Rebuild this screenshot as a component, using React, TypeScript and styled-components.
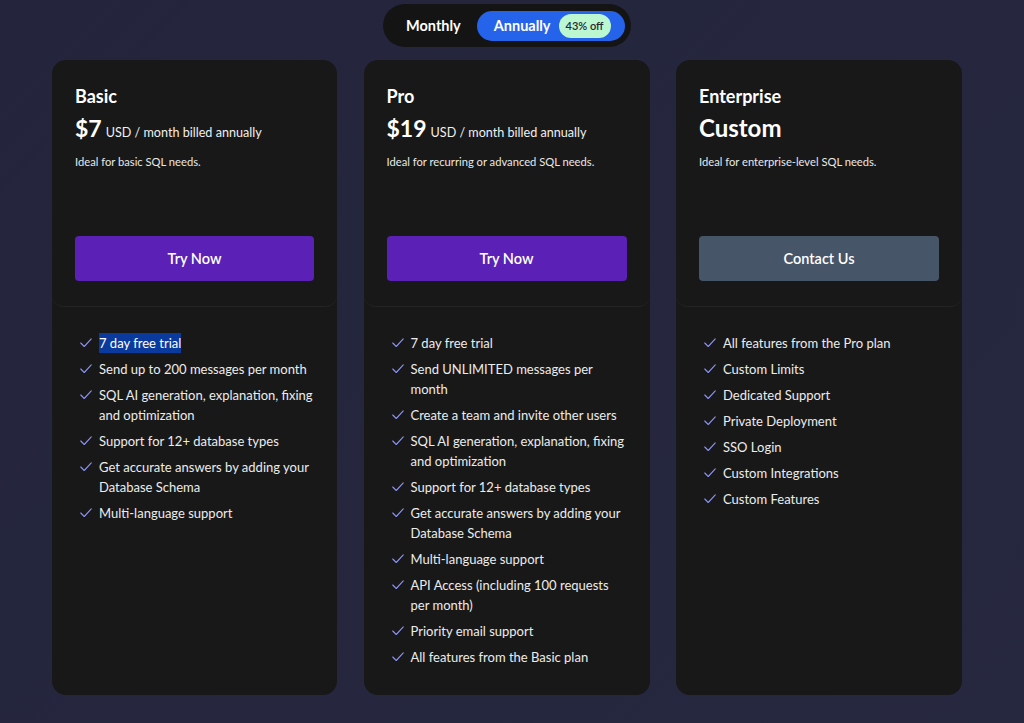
import { ReactElement } from 'react';
import styled, { createGlobalStyle, css } from 'styled-components';

const FONT = `Lato, 'Noto Sans', sans-serif`;

const GlobalStyle = createGlobalStyle`
	html, body {
		margin: 0;
		padding: 0;
		background: #25263f;
	}
	body {
		font-family: ${FONT};
		color: #f5f5f5;
		-webkit-font-smoothing: antialiased;
	}
`;

type Plan = {
	name: string;
	price?: string;
	custom?: string;
	description: string;
	cta: string;
	variant: 'primary' | 'muted';
	features: string[];
	highlightFirst?: boolean;
};

const PLANS: Plan[] = [
	{
		name: 'Basic',
		price: '$7',
		description: 'Ideal for basic SQL needs.',
		cta: 'Try Now',
		variant: 'primary',
		highlightFirst: true,
		features: [
			'7 day free trial',
			'Send up to 200 messages per month',
			'SQL AI generation, explanation, fixing and optimization',
			'Support for 12+ database types',
			'Get accurate answers by adding your Database Schema',
			'Multi-language support',
		],
	},
	{
		name: 'Pro',
		price: '$19',
		description: 'Ideal for recurring or advanced SQL needs.',
		cta: 'Try Now',
		variant: 'primary',
		features: [
			'7 day free trial',
			'Send UNLIMITED messages per month',
			'Create a team and invite other users',
			'SQL AI generation, explanation, fixing and optimization',
			'Support for 12+ database types',
			'Get accurate answers by adding your Database Schema',
			'Multi-language support',
			'API Access (including 100 requests per month)',
			'Priority email support',
			'All features from the Basic plan',
		],
	},
	{
		name: 'Enterprise',
		custom: 'Custom',
		description: 'Ideal for enterprise-level SQL needs.',
		cta: 'Contact Us',
		variant: 'muted',
		features: [
			'All features from the Pro plan',
			'Custom Limits',
			'Dedicated Support',
			'Private Deployment',
			'SSO Login',
			'Custom Integrations',
			'Custom Features',
		],
	},
];

const CheckIcon = (): ReactElement => (
	<svg
		width="14"
		height="14"
		viewBox="0 0 24 24"
		fill="none"
		stroke="#8b93f5"
		strokeWidth={1.9}
		strokeLinecap="round"
		strokeLinejoin="round"
	>
		<polyline points="21 5 9 18 3 12" />
	</svg>
);

export default function App(): ReactElement {
	return (
		<Page>
			<GlobalStyle />
			<ToggleRow>
				<Toggle>
					<ToggleOption>Monthly</ToggleOption>
					<ToggleOption active>
						Annually
						<Badge>43% off</Badge>
					</ToggleOption>
				</Toggle>
			</ToggleRow>
			<Grid>
				{PLANS.map((plan) => (
					<Card key={plan.name}>
						<CardHeader>
							<PlanName>{plan.name}</PlanName>
							{plan.price ? (
								<PriceRow>
									<Price>{plan.price}</Price>
									<PriceNote>USD / month billed annually</PriceNote>
								</PriceRow>
							) : (
								<CustomPrice>{plan.custom}</CustomPrice>
							)}
							<Description>{plan.description}</Description>
							<CtaButton variant={plan.variant}>{plan.cta}</CtaButton>
						</CardHeader>
						<FeatureList>
							{plan.features.map((f, i) => (
								<FeatureItem key={f}>
									<IconWrap>
										<CheckIcon />
									</IconWrap>
									{plan.highlightFirst && i === 0 ? (
										<Selected>{f}</Selected>
									) : (
										<span>{f}</span>
									)}
								</FeatureItem>
							))}
						</FeatureList>
					</Card>
				))}
			</Grid>
		</Page>
	);
}

const Page = styled.div`
	min-height: 723px;
	box-sizing: border-box;
	padding: 4px 0 0 52px;
	background: linear-gradient(135deg, #24253d 0%, #262840 100%);
`;

const ToggleRow = styled.div`
	width: 910px;
	display: flex;
	justify-content: center;
`;

const Toggle = styled.div`
	display: flex;
	align-items: center;
	height: 43px;
	width: 248px;
	box-sizing: border-box;
	padding: 0 6px 0 23px;
	background: #141414;
	border-radius: 22px;
`;

const ToggleOption = styled.div<{ active?: boolean }>`
	display: flex;
	align-items: center;
	gap: 8px;
	font-size: 14.5px;
	font-weight: 700;
	color: #ffffff;
	height: 30px;
	border-radius: 15px;
	${({ active }) =>
		active
			? css`
					flex: 1;
					background: #2563eb;
					padding: 0 0 0 17px;
					margin-left: 16px;
			  `
			: css`
					padding: 0;
			  `}
`;

const Badge = styled.span`
	background: #bbf7d0;
	color: #1f2937;
	font-size: 11px;
	font-weight: 600;
	border-radius: 12px;
	padding: 3px 7px;
	line-height: 18px;
`;

const Grid = styled.div`
	width: 910px;
	margin-top: 13px;
	display: grid;
	grid-template-columns: 285px 286px 286px;
	column-gap: 26.5px;
`;

const Card = styled.div`
	background: #181818;
	border-radius: 14px;
	display: flex;
	flex-direction: column;
	overflow: hidden;
`;

const CardHeader = styled.div`
	height: 247px;
	box-sizing: border-box;
	padding: 24px 23px 25px 23px;
	display: flex;
	flex-direction: column;
	border-bottom: 1px solid #242424;
	border-radius: 0 0 12px 12px;
`;

const PlanName = styled.div`
	font-size: 18px;
	font-weight: 700;
	line-height: 24px;
	color: #ffffff;
`;

const PriceRow = styled.div`
	display: flex;
	align-items: baseline;
	gap: 4px;
	margin-top: 5px;
	height: 30px;
	line-height: 30px;
`;

const Price = styled.span`
	font-size: 23px;
	font-weight: 700;
	color: #ffffff;
`;

const PriceNote = styled.span`
	font-size: 12.6px;
	color: #f0f0f0;
`;

const CustomPrice = styled.div`
	font-size: 24px;
	font-weight: 700;
	height: 30px;
	line-height: 30px;
	margin-top: 5px;
	color: #ffffff;
`;

const Description = styled.div`
	margin-top: 10px;
	font-size: 11.2px;
	line-height: 18px;
	color: #e8e8e8;
`;

const CtaButton = styled.button<{ variant: 'primary' | 'muted' }>`
	margin-top: auto;
	height: 45px;
	width: 100%;
	border: none;
	border-radius: 4px;
	font-family: ${FONT};
	font-size: 14.5px;
	font-weight: 600;
	color: #ffffff;
	background: ${({ variant }) => (variant === 'primary' ? '#5b21b6' : '#475569')};
	cursor: pointer;
`;

const FeatureList = styled.ul`
	list-style: none;
	margin: 0;
	padding: 26px 24px 28px 27px;
	display: flex;
	flex-direction: column;
	gap: 6px;
`;

const FeatureItem = styled.li`
	display: flex;
	align-items: flex-start;
	gap: 6px;
	font-size: 13px;
	line-height: 20px;
	color: #ececec;
`;

const IconWrap = styled.span`
	flex: none;
	display: flex;
	align-items: center;
	height: 20px;
`;

const Selected = styled.span`
	background: #0b3a9e;
	color: #ffffff;
`;
